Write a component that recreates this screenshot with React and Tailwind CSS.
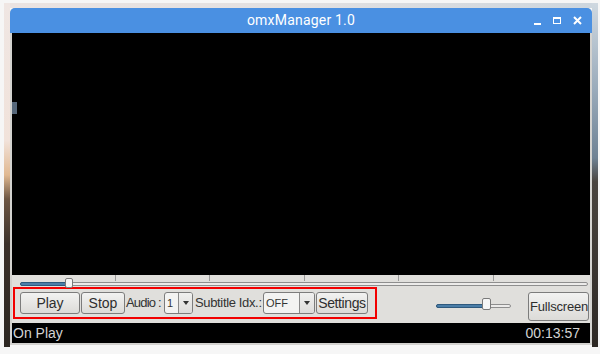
function Btn({ children, className = '' }) {
  return (
    <div
      className={`h-[22px] flex items-center justify-center rounded-[3px] border border-[#7c7c7c] bg-[linear-gradient(180deg,#f2f2f1,#dcdbd8)] text-[14px] text-[#2e2e2e] leading-none ${className}`}
    >
      {children}
    </div>
  )
}

function Combo({ value, w, split }) {
  return (
    <div
      className={`h-[22px] flex rounded-[3px] border border-[#7c7c7c] bg-[#f3f3f2] overflow-hidden ${w}`}
    >
      <div className={`flex items-center pl-[2px] text-[11px] text-[#333] ${split}`}>{value}</div>
      <div className="flex-1 flex items-center justify-center border-l border-[#8a8a8a] bg-[linear-gradient(180deg,#f0f0ef,#dddcda)]">
        <div className="w-0 h-0 border-l-[3px] border-r-[3px] border-t-[4px] border-l-transparent border-r-transparent border-t-[#333]" />
      </div>
    </div>
  )
}

export default function App() {
  const ticks = [103, 197, 292, 386, 481]
  return (
    <div className="w-[600px] h-[354px] overflow-hidden bg-[#f6f6f6] pt-[3px] pl-[4px] font-['Liberation_Sans',Arial,sans-serif]">
      <div className="w-[594px] h-[344px] flex">
        {/* wallpaper strips */}
        <div className="w-[6px] bg-[linear-gradient(180deg,#efe6e3_0%,#f1e2da_40%,#e0b890_50%,#6d5643_57%,#3b3029_70%,#2d2722_100%)]" />

        <div className="w-[582px] flex flex-col">
          <div className="h-[5px] bg-[linear-gradient(90deg,#ebe3e1,#e2e0e1_50%,#cdd6de)]" />

          <div className="flex flex-col rounded-t-[5px] overflow-hidden bg-[#d3d2cf]">
            {/* title bar */}
            <div className="h-[25px] relative flex items-center justify-center bg-[#4a90e2]">
              <span className="text-[14px] text-white font-['Roboto',sans-serif] tracking-[0.2px]">omxManager 1.0</span>
              <div className="absolute right-[10px] top-0 h-full flex items-center gap-[12px] text-white">
                <div className="w-[7px] h-[2px] bg-white mt-[6px]" />
                <div className="w-[8px] h-[7px] border-[1.5px] border-white border-t-2" />
                <svg width="9" height="9" viewBox="0 0 9 9">
                  <path d="M1 1 L8 8 M8 1 L1 8" stroke="white" strokeWidth="2" />
                </svg>
              </div>
            </div>

            <div className="px-[2px] pb-[2px] flex flex-col">
              {/* video */}
              <div className="h-[242px] bg-black relative">
                <div className="absolute left-0 top-[69px] w-[5px] h-[12px] bg-[#56677a]" />
              </div>

              {/* seek slider */}
              <div className="h-[12px] bg-[#e0dfdc] relative">
                {ticks.map((x) => (
                  <div key={x} className="absolute top-0 w-px h-[6px] bg-[#9a9a9a]" style={{ left: x }} />
                ))}
                <div className="absolute left-[8px] right-[2px] top-[7px] h-[4px] rounded-full border border-[#8e8e8e] bg-[#ecebea]" />
                <div className="absolute left-[8px] w-[46px] top-[7px] h-[4px] rounded-l-full bg-[#4b7ea8] border border-[#2f5a7e]" />
                <div className="absolute left-[53px] top-[3px] w-[8px] h-[10px] rounded-[2px] border border-[#7a7a7a] bg-[#f6f6f6]" />
              </div>

              {/* controls */}
              <div className="h-[36px] bg-[#e0dfdc] flex items-start">
                <div className="ml-[1px] w-[364px] h-[32px] border-2 border-[#f20000] flex items-center pl-[5px]">
                  <Btn className="w-[60px]">Play</Btn>
                  <Btn className="w-[44px] ml-px">Stop</Btn>
                  <span className="ml-[1px] w-[34px] whitespace-nowrap text-[13px] tracking-[-0.8px] text-[#333]">Audio :</span>
                  <div className="ml-[4px]">
                    <Combo value="1" w="w-[29px]" split="w-[13px]" />
                  </div>
                  <span className="ml-[2px] w-[67px] whitespace-nowrap text-[13px] tracking-[-0.35px] text-[#333]">Subtitle Idx.:</span>
                  <div className="ml-[1px]">
                    <Combo value="OFF" w="w-[52px]" split="w-[35px]" />
                  </div>
                  <Btn className="w-[52px] ml-px tracking-[-0.4px]">Settings</Btn>
                </div>

                {/* volume */}
                <div className="ml-[59px] mt-[13px] w-[75px] h-[12px] relative">
                  <div className="absolute left-0 right-0 top-[4px] h-[4px] rounded-full border border-[#8e8e8e] bg-[#ecebea]" />
                  <div className="absolute left-0 w-[48px] top-[4px] h-[4px] rounded-l-full bg-[#4b7ea8] border border-[#2f5a7e]" />
                  <div className="absolute left-[46px] -top-[2px] w-[9px] h-[12px] rounded-[2px] border border-[#7a7a7a] bg-[#f6f6f6]" />
                </div>

                <div className="ml-[17px] mt-[5px] w-[61px] h-[29px] flex items-center overflow-hidden rounded-[3px] border border-[#7c7c7c] bg-[linear-gradient(180deg,#f2f2f1,#dcdbd8)] pl-[1px] text-[13px] tracking-[-0.2px] text-[#2e2e2e] whitespace-nowrap">
                  Fullscreen
                </div>
              </div>

              {/* status */}
              <div className="h-[20px] bg-black flex items-center justify-between pl-[1px] pr-[10px] text-[14px] text-[#d4d4d4]">
                <span>On Play</span>
                <span>00:13:57</span>
              </div>
            </div>
          </div>
        </div>

        <div className="w-[6px] bg-[linear-gradient(180deg,#cfd8e0_0%,#9aabbb_25%,#6f8294_45%,#4a4540_52%,#2c2723_100%)]" />
      </div>
    </div>
  )
}
